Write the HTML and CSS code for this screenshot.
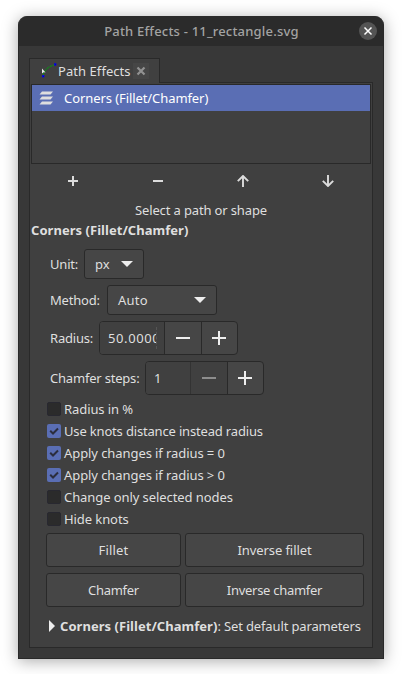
FILE: index.html
```
<!DOCTYPE html>
<html lang="en">
<head>
<meta charset="utf-8">
<title>Path Effects</title>
<link rel="stylesheet" href="styles.css">
</head>
<body>
<div class="window">
  <header class="titlebar">
    <span class="title">Path Effects - 11_rectangle.svg</span>
    <button class="close" aria-label="Close">
      <svg width="18" height="18" viewBox="0 0 18 18"><path d="M5.500 5.500l7 7M12.500 5.500l-7 7" stroke="#fff" stroke-width="1.500"/></svg>
    </button>
  </header>
  <div class="notebook">
    <div class="tab">
      <svg class="tab-icon" width="16" height="16" viewBox="0 0 16 16">
        <path d="M2 12C3.500 7.500 7 3.500 13 2" fill="none" stroke="#14821c" stroke-width="1.300" stroke-dasharray="3 .6"/>
        <path d="M1 5.500v5l1.500-1.200 2 .2z" fill="#e8e8e8"/>
        <path d="M1.500 12.500h1.500v1.500h-1.500zM13.500 .700h1.500v1.500h-1.500z" fill="#222" stroke="#0000f0"/>
      </svg>
      <span class="tab-label">Path Effects</span>
      <span class="tab-close"><svg width="10" height="10" viewBox="0 0 10 10"><path d="M1.500 1.500l7 7M8.500 1.500l-7 7" stroke="#929292" stroke-width="2.200"/></svg></span>
    </div>
    <div class="page">
      <div class="list">
        <div class="row">
          <svg width="14" height="14" viewBox="0 0 14 14"><path d="M3 .5h11l-2.500 3H.5zM3 5.500h11l-2.500 3H.5zM3 10.500h11l-2.500 3H.5z" fill="#dedede"/></svg>
          <span>Corners (Fillet/Chamfer)</span>
        </div>
      </div>
      <div class="toolbar">
        <span><svg width="12" height="12" viewBox="0 0 12 12"><path d="M1 6h10M6 1v10" stroke="#dcdcdc" stroke-width="2"/></svg></span>
        <span><svg width="12" height="12" viewBox="0 0 12 12"><path d="M1 6h10" stroke="#dcdcdc" stroke-width="2"/></svg></span>
        <span><svg width="12" height="12" viewBox="0 0 12 12"><path d="M6 12V1.500M.8 6.200L6 1l5.200 5.200" fill="none" stroke="#dcdcdc" stroke-width="1.900"/></svg></span>
        <span><svg width="12" height="12" viewBox="0 0 12 12"><path d="M6 0v10.500M.8 5.800L6 11l5.200-5.200" fill="none" stroke="#dcdcdc" stroke-width="1.900"/></svg></span>
      </div>
      <div class="hint">Select a path or shape</div>
      <div class="heading">Corners (Fillet/Chamfer)</div>
      <div class="field unit">
        <label>Unit:</label>
        <div class="select select-unit"><span>px</span><i class="arrow"></i></div>
      </div>
      <div class="field method">
        <label>Method:</label>
        <div class="select select-method"><span>Auto</span><i class="arrow"></i></div>
      </div>
      <div class="field radius">
        <label>Radius:</label>
        <div class="spin">
          <div class="value value-radius"><span>50.0000</span></div>
          <div class="step"><svg width="14" height="14" viewBox="0 0 14 14"><path d="M0 7h14" stroke="#eee" stroke-width="2"/></svg></div>
          <div class="step"><svg width="14" height="14" viewBox="0 0 14 14"><path d="M0 7h14M7 0v14" stroke="#eee" stroke-width="2"/></svg></div>
        </div>
      </div>
      <div class="field steps">
        <label>Chamfer steps:</label>
        <div class="spin">
          <div class="value value-steps"><span>1</span></div>
          <div class="step disabled"><svg width="14" height="14" viewBox="0 0 14 14"><path d="M0 7h14" stroke="#8d8d8d" stroke-width="2"/></svg></div>
          <div class="step"><svg width="14" height="14" viewBox="0 0 14 14"><path d="M0 7h14M7 0v14" stroke="#eee" stroke-width="2"/></svg></div>
        </div>
      </div>
      <div class="checks">
        <div class="check"><i class="box"></i><span>Radius in %</span></div>
        <div class="check"><i class="box on"><svg width="14" height="14" viewBox="0 0 14 14"><path d="M3.200 6.800l2.800 2.700 5-5" fill="none" stroke="#2b2d3d" stroke-width="2"/></svg></i><span class="tight">Use knots distance instead radius</span></div>
        <div class="check"><i class="box on"><svg width="14" height="14" viewBox="0 0 14 14"><path d="M3.200 6.800l2.800 2.700 5-5" fill="none" stroke="#2b2d3d" stroke-width="2"/></svg></i><span>Apply changes if radius = 0</span></div>
        <div class="check"><i class="box on"><svg width="14" height="14" viewBox="0 0 14 14"><path d="M3.200 6.800l2.800 2.700 5-5" fill="none" stroke="#2b2d3d" stroke-width="2"/></svg></i><span>Apply changes if radius &gt; 0</span></div>
        <div class="check"><i class="box"></i><span>Change only selected nodes</span></div>
        <div class="check"><i class="box"></i><span>Hide knots</span></div>
      </div>
      <div class="buttons">
        <button class="wide">Fillet</button>
        <button>Inverse fillet</button>
        <button class="narrow">Chamfer</button>
        <button class="narrow">Inverse chamfer</button>
      </div>
      <div class="expander">
        <svg width="6" height="12" viewBox="0 0 6 12"><path d="M0 0l6 6-6 6z" fill="#eee"/></svg>
        <span><b>Corners (Fillet/Chamfer)</b>: Set default parameters</span>
      </div>
    </div>
  </div>
</div>
</body>
</html>
```
FILE: styles.css
```
* { box-sizing: border-box; }
body {
  margin: 0;
  padding: 16px 18px 15px;
  height: 674px;
  overflow: hidden;
  background: #fff;
  color: #dfdfdf;
  font: 13px/18px "Noto Sans", sans-serif;
  letter-spacing: -0.08px;
}
svg { display: block; flex: none; }
button { margin: 0; padding: 0; font: inherit; letter-spacing: inherit; color: inherit; }
label { letter-spacing: -0.2px; white-space: nowrap; }

.window {
  height: 643px;
  border: 1px solid #292929;
  border-top: 0;
  border-radius: 9px 9px 0 0;
  background: #383838;
  box-shadow: 0 2px 16px rgba(0, 0, 0, .34);
}
.titlebar {
  display: flex;
  align-items: center;
  height: 30px;
  padding: 0 6px 0 24px;
  border-radius: 9px 9px 0 0;
  background: #2b2b2b;
}
.title { flex: 1; padding-left: 1px; text-align: center; color: #a3a3a3; font-weight: 500; letter-spacing: .2px; }
.close { width: 18px; height: 18px; border: 0; border-radius: 50%; background: #545454; }

.notebook { padding: 12px 10px 0; }
.tab {
  position: relative;
  display: flex;
  align-items: center;
  width: 131px;
  height: 25px;
  margin-bottom: -1px;
  padding: 0 0 0 11px;
  border: 1px solid #292929;
  border-bottom: 0;
  background: #404040;
}
.tab-label { width: 75px; margin-left: 1px; letter-spacing: .06px; }
.tab-close { display: flex; align-items: center; justify-content: center; width: 16px; height: 16px; background: #464646; }
.page { height: 566px; border: 1px solid #292929; background: #404040; padding: 1px 1px 0; }

.list { height: 80px; border: 1px solid #292929; }
.row { display: flex; align-items: center; height: 26px; padding-left: 7px; gap: 11px; background: #5a6eb4; color: #fff; }
.toolbar { display: grid; grid-template-columns: repeat(4, 85px); height: 34px; }
.toolbar span { display: flex; align-items: center; justify-content: center; padding-right: 1px; }
.hint { margin-top: 2px; height: 20px; line-height: 20px; text-align: center; letter-spacing: -0.14px; }
.heading { height: 20px; line-height: 20px; font-weight: 700; letter-spacing: .04px; }

.field { display: flex; align-items: center; padding-left: 19px; }
.unit { height: 30px; margin-top: 9px; }
.method { height: 30px; margin-top: 6px; }
.radius { height: 34px; margin-top: 6px; }
.steps { height: 34px; margin-top: 6px; }
.unit label { width: 34px; }
.method label { width: 57px; }
.radius label { width: 49px; }
.steps label { width: 95px; }

.select {
  display: flex;
  align-items: center;
  justify-content: space-between;
  height: 30px;
  padding: 0 10px;
  border: 1px solid #292929;
  border-radius: 3px;
  background: #464646;
}
.select-unit { width: 60px; }
.select-method { width: 110px; letter-spacing: .2px; }
.arrow { border: 6px solid transparent; border-top-color: #eee; border-bottom: 0; }

.spin { display: flex; height: 34px; border: 1px solid #292929; border-radius: 4px; background: #464646; overflow: hidden; }
.value { display: flex; align-items: center; padding-left: 8px; background: #404040; }
.value span { overflow: hidden; }
.value-radius { width: 64px; }
.value-radius span { width: 49px; letter-spacing: .6px; line-height: 22px; border-right: 1px dashed #555; }
.value-steps { width: 44px; }
.step { display: flex; align-items: center; justify-content: center; width: 37px; border-left: 1px solid #292929; }
.step:last-child { width: 36px; padding-right: 1px; }
.disabled { background: #404040; border-left-color: #333; }

.checks { margin-top: 3px; padding-left: 16px; }
.check { display: flex; align-items: center; gap: 3px; height: 22px; }
.box { width: 14px; height: 14px; border-radius: 2px; background: #2b2b2b; border: 1px solid #282830; }
.box.on { border: 0; background: #5a6eb4; }
.tight { letter-spacing: -0.17px; }

.buttons { display: grid; grid-template-columns: 135px 179px; gap: 6px 4px; margin-top: 3px; padding-left: 15px; }
.buttons button { height: 34px; border: 1px solid #292929; border-radius: 3px; background: #464646; }
.buttons .narrow { letter-spacing: -0.28px; }
.buttons .wide { letter-spacing: .19px; }
.expander { display: flex; align-items: center; gap: 5px; height: 18px; margin-top: 10px; padding-left: 18px; white-space: nowrap; letter-spacing: -0.14px; }
.expander b { letter-spacing: .04px; }
```
